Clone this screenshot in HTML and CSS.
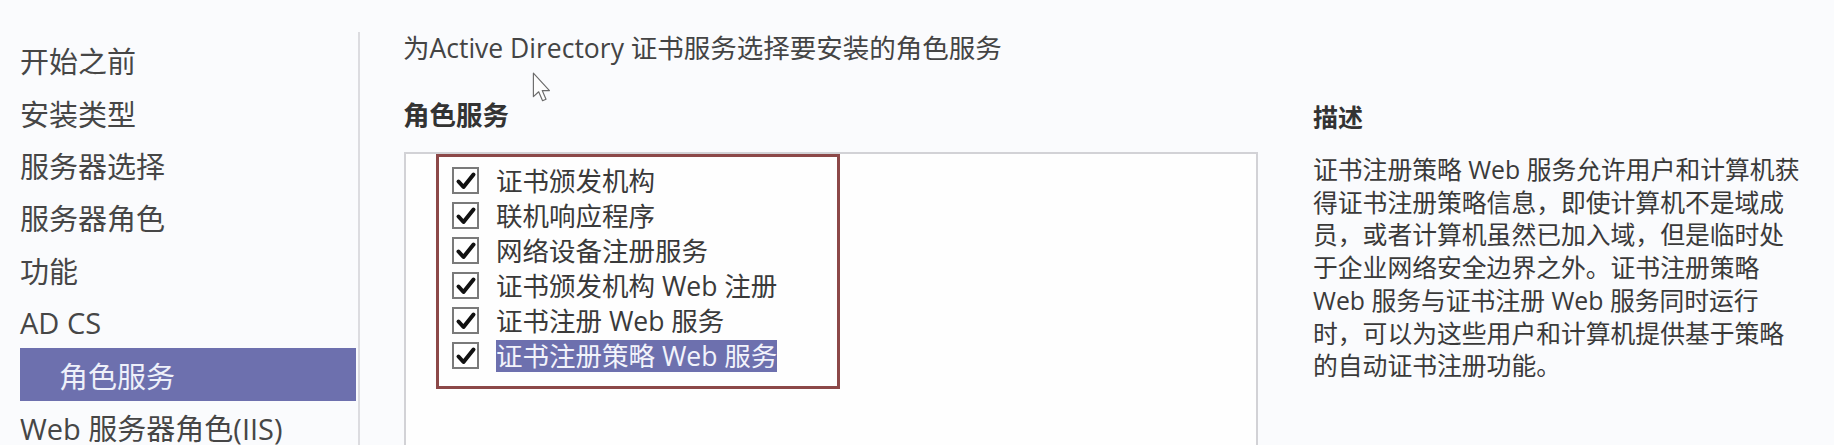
FILE: index.html
```html
<!DOCTYPE html>
<html lang="zh-CN">
<head>
<meta charset="utf-8">
<title>添加角色和功能向导</title>
<link rel="stylesheet" href="styles.css">
</head>
<body>
<div class="app">
  <nav class="nav">
    <div class="nav-item">开始之前</div>
    <div class="nav-item">安装类型</div>
    <div class="nav-item">服务器选择</div>
    <div class="nav-item">服务器角色</div>
    <div class="nav-item">功能</div>
    <div class="nav-item">AD CS</div>
    <div class="nav-item sel">角色服务</div>
    <div class="nav-item">Web 服务器角色(IIS)</div>
  </nav>
  <main class="main">
    <div class="title">为Active Directory 证书服务选择要安装的角色服务</div>
    <div class="content">
      <section class="roles">
        <div class="heading">角色服务</div>
        <div class="listbox">
          <div class="redbox">
            <div class="row"><span class="cb"><svg viewBox="0 0 22 22" width="22" height="22"><path d="M3.5 11.5 L8.5 17 L18.5 4.5" fill="none" stroke="#111" stroke-width="4" stroke-linecap="round" stroke-linejoin="round"/></svg></span><span class="lbl">证书颁发机构</span></div>
            <div class="row"><span class="cb"><svg viewBox="0 0 22 22" width="22" height="22"><path d="M3.5 11.5 L8.5 17 L18.5 4.5" fill="none" stroke="#111" stroke-width="4" stroke-linecap="round" stroke-linejoin="round"/></svg></span><span class="lbl">联机响应程序</span></div>
            <div class="row"><span class="cb"><svg viewBox="0 0 22 22" width="22" height="22"><path d="M3.5 11.5 L8.5 17 L18.5 4.5" fill="none" stroke="#111" stroke-width="4" stroke-linecap="round" stroke-linejoin="round"/></svg></span><span class="lbl">网络设备注册服务</span></div>
            <div class="row"><span class="cb"><svg viewBox="0 0 22 22" width="22" height="22"><path d="M3.5 11.5 L8.5 17 L18.5 4.5" fill="none" stroke="#111" stroke-width="4" stroke-linecap="round" stroke-linejoin="round"/></svg></span><span class="lbl">证书颁发机构 Web 注册</span></div>
            <div class="row"><span class="cb"><svg viewBox="0 0 22 22" width="22" height="22"><path d="M3.5 11.5 L8.5 17 L18.5 4.5" fill="none" stroke="#111" stroke-width="4" stroke-linecap="round" stroke-linejoin="round"/></svg></span><span class="lbl">证书注册 Web 服务</span></div>
            <div class="row"><span class="cb"><svg viewBox="0 0 22 22" width="22" height="22"><path d="M3.5 11.5 L8.5 17 L18.5 4.5" fill="none" stroke="#111" stroke-width="4" stroke-linecap="round" stroke-linejoin="round"/></svg></span><span class="lbl selected">证书注册策略 Web 服务</span></div>
          </div>
        </div>
      </section>
      <section class="desc">
        <div class="desc-heading">描述</div>
        <p class="desc-text">证书注册策略 Web 服务允许用户和计算机获<br>得证书注册策略信息，即使计算机不是域成<br>员，或者计算机虽然已加入域，但是临时处<br>于企业网络安全边界之外。证书注册策略<br>Web 服务与证书注册 Web 服务同时运行<br>时，可以为这些用户和计算机提供基于策略<br>的自动证书注册功能。</p>
      </section>
    </div>
  </main>
</div>
<svg class="cursor" viewBox="0 0 17 27" width="20" height="31"><path d="M1 1 L1 21.5 L5.6 17.2 L9 25 L12 23.7 L8.7 16.2 L15 16.2 Z" fill="#fdfdfd" stroke="#6a6a6a" stroke-width="1" stroke-linejoin="round"/></svg>
</body>
</html>
```
FILE: styles.css
```css
html, body {
  margin: 0;
  padding: 0;
}
body {
  width: 1834px;
  height: 445px;
  overflow: hidden;
  background: #fafbfd;
  color: #3d3d3d;
  font-family: "Open Sans", "Noto Sans CJK SC", sans-serif;
  position: relative;
}
.app {
  display: flex;
  height: 445px;
}
.nav {
  flex: none;
  width: 360px;
  box-sizing: border-box;
  margin-top: 32px;
  padding-top: 2px;
  border-right: 2px solid #dcdce0;
}
.nav-item {
  height: 52.4px;
  margin-left: 20px;
  margin-right: 2px;
  padding-left: 0;
  display: flex;
  align-items: center;
  font-size: 29px;
  color: #464646;
  white-space: nowrap;
}
.nav-item.sel {
  background: #6d70ae;
  color: #eef0fa;
  padding-left: 39px;
}
.main {
  flex: 1;
  padding-left: 43px;
  display: flex;
  flex-direction: column;
  min-width: 0;
}
.title {
  margin-top: 30px;
  height: 36px;
  line-height: 36px;
  font-size: 26.5px;
  color: #444;
  white-space: nowrap;
}
.content {
  display: flex;
  margin-top: 31px;
}
.roles {
  flex: none;
  width: 855px;
  display: flex;
  flex-direction: column;
}
.heading {
  height: 36px;
  line-height: 36px;
  font-size: 26.5px;
  font-weight: 700;
  color: #333;
}
.listbox {
  margin-top: 19px;
  margin-left: 1px;
  height: 300px;
  background: #fefefe;
  border: 2px solid #d2d2d6;
  border-bottom: none;
}
.redbox {
  margin-left: 30px;
  width: 404px;
  height: 235px;
  box-sizing: border-box;
  border: 3px solid #8c4848;
  padding: 6px 0 0 13px;
}
.row {
  display: flex;
  align-items: center;
  height: 35px;
}
.cb {
  flex: none;
  width: 27px;
  height: 27px;
  box-sizing: border-box;
  border: 2px solid #7a7a7a;
  background: #fff;
  display: flex;
  align-items: center;
  justify-content: center;
}
.lbl {
  margin-left: 17px;
  font-size: 26.5px;
  line-height: 32px;
  color: #3a3a3a;
  white-space: nowrap;
}
.lbl.selected {
  background: #6d70ae;
  color: #f2f3fb;
}
.desc {
  margin-left: 55px;
  padding-top: 2px;
}
.desc-heading {
  height: 36px;
  line-height: 36px;
  font-size: 25px;
  font-weight: 700;
  color: #333;
}
.desc-text {
  margin: 18px 0 0;
  font-size: 24.8px;
  line-height: 32.7px;
  color: #3a3a3a;
  white-space: nowrap;
}
.cursor {
  position: absolute;
  left: 532px;
  top: 72px;
}
```
